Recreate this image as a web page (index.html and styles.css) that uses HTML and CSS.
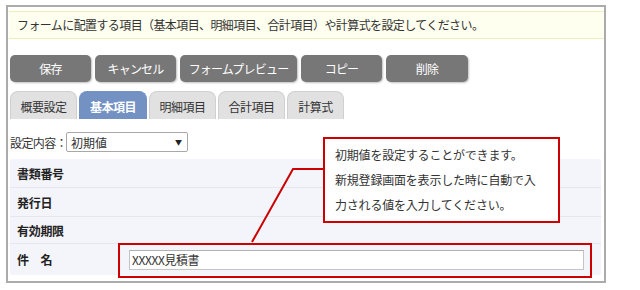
FILE: index.html
```html
<!DOCTYPE html>
<html lang="ja">
<head>
    <meta charset="UTF-8">
    <title>フォーム項目設定</title>
    <link rel="stylesheet" href="styles.css">
</head>
<body>
    <div class="frame">
        <div class="notice">フォームに配置する項目（基本項目、明細項目、合計項目）や計算式を設定してください。</div>

        <div class="buttons">
            <button class="btn w81">保存</button>
            <button class="btn w81">キャンセル</button>
            <button class="btn w117">フォームプレビュー</button>
            <button class="btn w81">コピー</button>
            <button class="btn w82">削除</button>
        </div>

        <div class="tabs">
            <div class="tab w67">概要設定</div>
            <div class="tab w68 active">基本項目</div>
            <div class="tab w67">明細項目</div>
            <div class="tab w67">合計項目</div>
            <div class="tab w57">計算式</div>
        </div>

        <div class="setting">
            <span class="setting-label">設定内容：</span>
            <div class="fake-select">
                <span>初期値</span>
                <span class="arrow">▼</span>
            </div>
        </div>

        <div class="panel">
            <div class="row"><span class="label">書類番号</span></div>
            <div class="row"><span class="label">発行日</span></div>
            <div class="row"><span class="label">有効期限</span></div>
            <div class="row last">
                <span class="label">件　名</span>
                <div class="field">XXXXX見積書</div>
            </div>
        </div>
    </div>

    <!-- annotation overlay -->
    <div class="highlight"></div>
    <svg class="connector" width="640" height="290" viewBox="0 0 640 290">
        <polyline points="324,169 293,169 252,242" fill="none" stroke="#cc0000" stroke-width="2"/>
    </svg>
    <div class="callout">
        <p>初期値を設定することができます。</p>
        <p>新規登録画面を表示した時に自動で入</p>
        <p>力される値を入力してください。</p>
    </div>
</body>
</html>
```

FILE: styles.css
```css
body {
    margin: 0;
    background: #fff;
    font-family: "Noto Sans CJK JP", "Noto Sans", sans-serif;
    font-size: 12px;
    color: #333;
    position: relative;
    width: 640px;
    height: 290px;
    overflow: hidden;
}
.frame {
    margin: 5px 0 0 6px;
    width: 594px;
    height: 270px;
    border: 2px solid #ababab;
    padding: 4px 0 0 2px;
    box-sizing: content-box;
}
.notice {
    margin-left: -1px;
    height: 26px;
    line-height: 26px;
    padding-left: 8px;
    background: #ffffef;
    border-top: 1px solid #eeeebb;
    border-bottom: 1px solid #eeeebb;
    letter-spacing: -0.6px;
    color: #333;
}
.buttons {
    display: flex;
    gap: 4px;
    margin-top: 16px;
}
.btn {
    height: 27px;
    border: none;
    border-radius: 5px;
    background: #777;
    color: #fff;
    font-family: inherit;
    font-size: 12px;
    letter-spacing: -0.8px;
    padding: 0;
    box-shadow: 1px 1px 2px rgba(0, 0, 0, 0.25);
}
.w81 { width: 81px; }
.w82 { width: 82px; }
.w117 { width: 117px; }
.tabs {
    display: flex;
    gap: 2px;
    margin-top: 9px;
}
.tab {
    height: 28px;
    line-height: 29px;
    text-align: center;
    background: #e1e1e1;
    border: 1px solid #d0d0d0;
    border-bottom: none;
    border-radius: 8px 8px 0 0;
    box-sizing: border-box;
    color: #333;
    letter-spacing: -0.5px;
}
.tab.active {
    background: #7391c3;
    border-color: #7391c3;
    color: #fff;
    font-weight: bold;
}
.w67 { width: 67px; }
.w68 { width: 68px; }
.w57 { width: 57px; }
.setting {
    display: flex;
    align-items: center;
    margin-top: 13px;
    height: 20px;
}
.setting-label {
    width: 56px;
    letter-spacing: -0.6px;
    white-space: nowrap;
}
.fake-select {
    width: 122px;
    height: 20px;
    box-sizing: border-box;
    border: 1px solid #a8a8a8;
    border-radius: 2px;
    display: flex;
    justify-content: space-between;
    align-items: center;
    padding: 0 5px 0 4px;
}
.arrow {
    font-size: 7px;
    color: #222;
}
.panel {
    margin-top: 7px;
    width: 591px;
    background: #f4f4fb;
    border-radius: 2px;
    display: grid;
    grid-template-rows: 29px 29px 27px 31px;
}
.row {
    display: flex;
    align-items: center;
    padding-left: 7px;
    border-bottom: 1px solid #e6e6ee;
    box-sizing: border-box;
}
.row.last { border-bottom: none; }
.label {
    width: 112px;
    font-weight: bold;
    color: #222;
    letter-spacing: -0.3px;
}
.field {
    width: 455px;
    height: 20px;
    box-sizing: border-box;
    background: #fff;
    border: 1px solid #c4c4c4;
    border-top-color: #b0b0b0;
    padding-left: 2px;
    line-height: 18px;
    letter-spacing: -0.4px;
}
.highlight {
    position: absolute;
    left: 118px;
    top: 243px;
    width: 474px;
    height: 35px;
    border: 2px solid #cc0000;
    box-sizing: border-box;
}
.connector {
    position: absolute;
    left: 0;
    top: 0;
}
.callout {
    position: absolute;
    left: 323px;
    top: 137px;
    width: 237px;
    height: 86px;
    box-sizing: border-box;
    background: #fff;
    border: 2px solid #cc0000;
    padding: 3px 0 0 10px;
}
.callout p {
    margin: 0;
    line-height: 25px;
    letter-spacing: -0.2px;
    white-space: nowrap;
}
```
